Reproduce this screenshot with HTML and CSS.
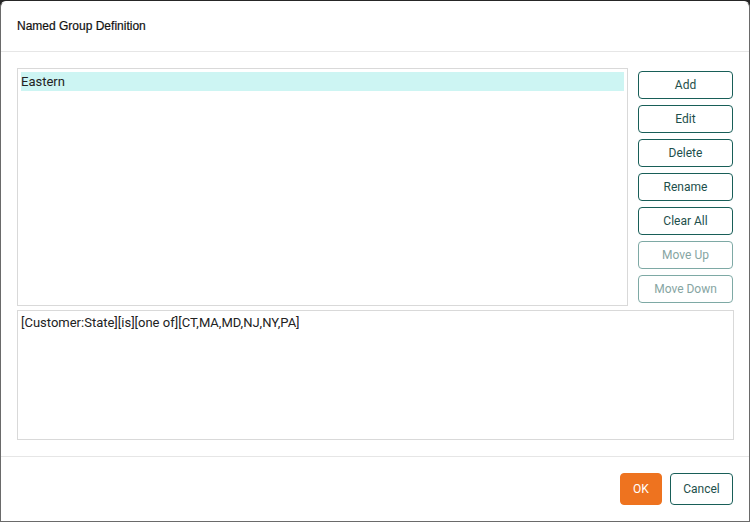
FILE: index.html
```html
<!DOCTYPE html>
<html>
<head>
<meta charset="utf-8">
<link rel="stylesheet" href="styles.css">
</head>
<body>
<div class="dialog">
  <div class="header"><span class="title">Named Group Definition</span></div>
  <div class="content">
    <div class="top">
      <div class="list">
        <div class="item selected">Eastern</div>
      </div>
      <div class="side">
        <button class="btn">Add</button>
        <button class="btn">Edit</button>
        <button class="btn">Delete</button>
        <button class="btn">Rename</button>
        <button class="btn">Clear All</button>
        <button class="btn disabled">Move Up</button>
        <button class="btn disabled">Move Down</button>
      </div>
    </div>
    <div class="expr">[Customer:State][is][one of][CT,MA,MD,NJ,NY,PA]</div>
  </div>
  <div class="footer">
    <button class="ok">OK</button>
    <button class="cancel">Cancel</button>
  </div>
</div>
</body>
</html>
```
FILE: styles.css
```css
html, body {
  margin: 0;
  padding: 0;
  background: #262626;
  height: 522px;
  overflow: hidden;
}
body {
  padding-top: 1px;
  box-sizing: border-box;
}
.dialog {
  box-sizing: border-box;
  width: 750px;
  height: 521px;
  background: #ffffff;
  border: 1px solid #6a6a6a;
  border-top-color: #ffffff;
  border-radius: 6px 6px 0 0;
  display: flex;
  flex-direction: column;
  font-family: Roboto, "Liberation Sans", sans-serif;
}
.header {
  height: 50px;
  box-sizing: border-box;
  border-bottom: 1px solid #e6e6e6;
  padding: 0 16px;
  display: flex;
  align-items: center;
}
.title {
  font-family: "Liberation Sans", Arial, sans-serif;
  font-size: 12px;
  font-weight: normal;
  color: #111;
  margin-top: -1px;
  -webkit-text-stroke: 0.2px #111;
}
.content {
  padding: 16px 15px 16px 16px;
  border-bottom: 1px solid #e6e6e6;
  display: flex;
  flex-direction: column;
  gap: 4px;
}
.top {
  display: flex;
  gap: 10px;
}
.list {
  box-sizing: border-box;
  width: 611px;
  height: 238px;
  border: 1px solid #d9d9d9;
  padding: 3px 3px;
}
.item {
  height: 19px;
  line-height: 19px;
  font-size: 13px;
  color: #222;
  padding-left: 0;
}
.item.selected {
  background: #cdf5f3;
}
.side {
  display: flex;
  flex-direction: column;
  gap: 6px;
  padding-top: 3px;
}
.btn {
  box-sizing: border-box;
  width: 95px;
  height: 28px;
  border: 1px solid #185e58;
  border-radius: 4px;
  background: #fff;
  color: #1d4f4b;
  font-family: Roboto, "Liberation Sans", sans-serif;
  font-size: 12px;
  padding: 0;
  margin: 0;
}
.btn.disabled {
  border-color: #7ea9a5;
  color: #86a5a2;
}
.expr {
  box-sizing: border-box;
  width: 717px;
  height: 130px;
  border: 1px solid #d9d9d9;
  padding: 4px 3px;
  font-size: 13px;
  color: #222;
  line-height: 16px;
}
.footer {
  display: flex;
  justify-content: flex-end;
  gap: 8px;
  padding: 16px 16px 16px 16px;
}
.ok, .cancel {
  box-sizing: border-box;
  height: 32px;
  border-radius: 4px;
  font-family: Roboto, "Liberation Sans", sans-serif;
  font-size: 12px;
  padding: 0;
  margin: 0;
}
.ok {
  width: 42px;
  background: #ee731f;
  border: 1px solid #ee731f;
  color: #fff;
}
.cancel {
  width: 63px;
  background: #fff;
  border: 1px solid #185e58;
  color: #1d4f4b;
}
```
